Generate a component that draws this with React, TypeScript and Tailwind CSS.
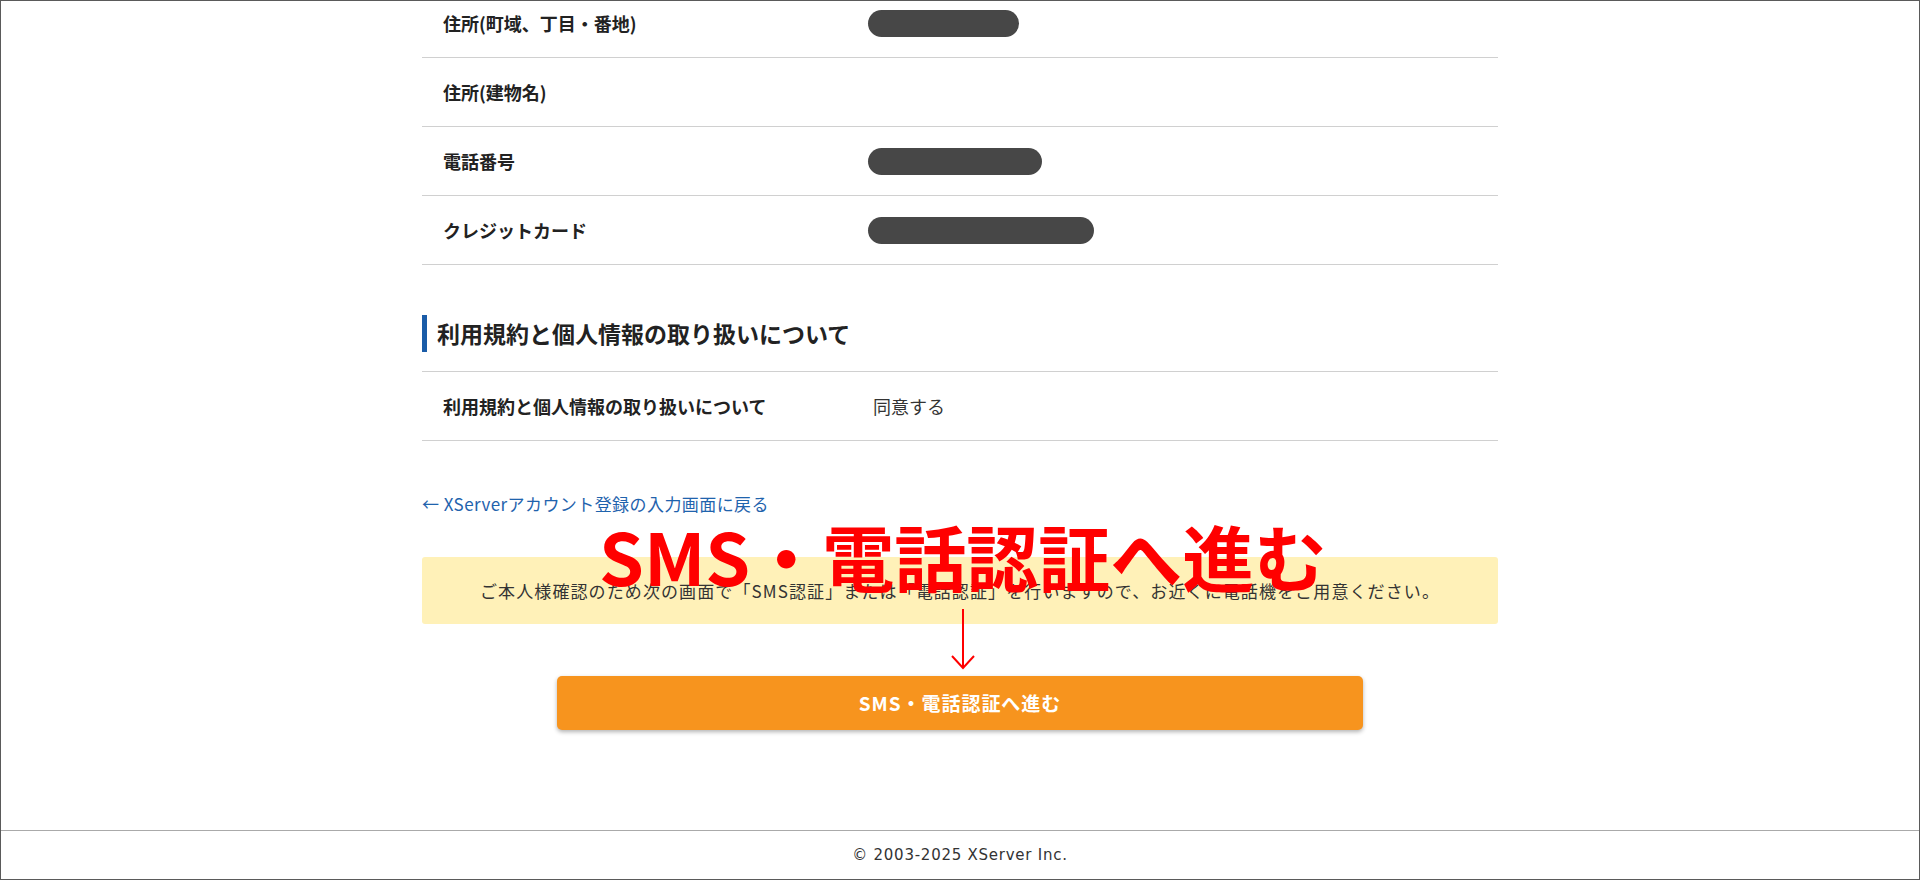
import React from 'react';

interface RowProps {
  label: string;
  children?: React.ReactNode;
}

const Row: React.FC<RowProps> = ({ label, children }) => (
  <div className="flex h-[69px] items-center border-b border-[#d0d0d0]">
    <div className="w-[446px] pl-[21px] text-[18px] font-bold text-[#222]">{label}</div>
    <div className="flex-1 text-[18px] text-[#333]">{children}</div>
  </div>
);

const Masked: React.FC<{ width: string }> = ({ width }) => (
  <div className={`h-[27px] rounded-full bg-[#474747] ${width}`} />
);

export default function App() {
  return (
    <div
      className="relative flex h-[880px] w-full flex-col overflow-hidden border border-[#5a5a5a] bg-white"
      style={{ fontFamily: '"Noto Sans CJK JP", "Noto Sans", sans-serif' }}
    >
      <main className="flex-1">
        <div className="mx-auto -mt-[12px] w-[1076px]">
          <Row label="住所(町域、丁目・番地)">
            <Masked width="w-[151px]" />
          </Row>
          <Row label="住所(建物名)" />
          <Row label="電話番号">
            <Masked width="w-[174px]" />
          </Row>
          <Row label="クレジットカード">
            <Masked width="w-[226px]" />
          </Row>

          <h2 className="mt-[50px] mb-[19px] flex h-[37px] items-center border-l-[5px] border-[#1a5ca8] pl-[10px] text-[23px] font-bold text-[#222]">
            利用規約と個人情報の取り扱いについて
          </h2>
          <div className="border-t border-[#d0d0d0]">
            <Row label="利用規約と個人情報の取り扱いについて">
              <span className="pl-[5px]">同意する</span>
            </Row>
          </div>

          <a href="#" className="mt-[51px] block text-[17px] leading-[24px] tracking-[0.025em] text-[#1f63ad]">
            ← XServerアカウント登録の入力画面に戻る
          </a>

          <div className="mt-[41px] flex h-[67px] items-center justify-center rounded-[3px] bg-[#fff1b8] text-[17px] tracking-[0.065em] text-[#333]">
            ご本人様確認のため次の画面で「SMS認証」または「電話認証」を行いますので、お近くに電話機をご用意ください。
          </div>

          <div className="mt-[52px] flex justify-center">
            <button
              type="button"
              className="flex h-[54px] w-[806px] items-center justify-center rounded-[5px] bg-[#f7941e] text-[19px] font-bold tracking-[0.05em] text-white shadow-[0_2px_4px_rgba(0,0,0,0.3)]"
            >
              SMS・電話認証へ進む
            </button>
          </div>
        </div>
      </main>

      <footer
        className="flex h-[49px] items-center justify-center border-t border-[#aaa] text-[15px] tracking-[0.05em] text-[#333]"
        style={{ fontFamily: '"DejaVu Sans", Verdana, sans-serif' }}
      >
        © 2003-2025 XServer Inc.
      </footer>

      {/* annotation overlay */}
      <div className="pointer-events-none absolute left-[598px] top-[518px] whitespace-nowrap text-[72px] font-bold leading-none text-[#ff0000]">
        SMS・電話認証へ進む
      </div>
      <svg
        className="pointer-events-none absolute left-[950px] top-[606px]"
        width="24"
        height="64"
        viewBox="0 0 24 64"
        fill="none"
        stroke="#ff0000"
        strokeWidth="2"
      >
        <path d="M12 2 V61" />
        <path d="M1 49 L12 61 L23 49" />
      </svg>
    </div>
  );
}
